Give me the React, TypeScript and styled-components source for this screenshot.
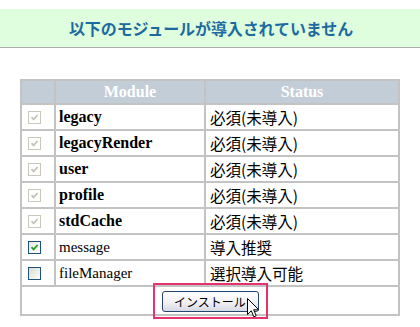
import React from "react";
import styled, { createGlobalStyle } from "styled-components";

const Global = createGlobalStyle`
  html, body { margin: 0; padding: 0; background: #ffffff; }
  body { font-family: "Liberation Serif", "Noto Sans CJK JP", serif; }
`;

const Page = styled.div`
  width: 420px;
  height: 327px;
  overflow: hidden;
  padding-top: 9px;
  box-sizing: border-box;
`;

const Banner = styled.div`
  height: 38px;
  background: #defedd;
  border-bottom: 1px solid #aeaeae;
  display: flex;
  align-items: center;
  justify-content: center;
`;

const Title = styled.h1`
  margin: 0;
  font-family: "Noto Sans CJK JP", sans-serif;
  font-size: 16px;
  font-weight: 700;
  color: #1d6aa0;
  letter-spacing: -0.1px;
  line-height: 1;
  padding-left: 2px;
`;

const Table = styled.table`
  margin: 31px 0 0 20px;
  width: 380px;
  border-collapse: separate;
  border-spacing: 2px;
  background: #c3c3c3;
  table-layout: fixed;
`;

const HeadCell = styled.th`
  height: 22px;
  padding: 0;
  background: #c3cdd7;
  color: #ffffff;
  font-family: "Liberation Serif", serif;
  font-size: 16px;
  font-weight: 700;
  text-align: center;
  line-height: 22px;
`;

const Cell = styled.td`
  height: 24px;
  padding: 0;
  background: #ffffff;
  line-height: 24px;
  vertical-align: middle;
`;

const CheckCell = styled(Cell)`
  padding-left: 6px;
`;

const NameCell = styled(Cell)<{ $required: boolean }>`
  padding-left: 3px;
  font-family: "Liberation Serif", serif;
  font-size: ${(p) => (p.$required ? "16px" : "15px")};
  font-weight: ${(p) => (p.$required ? 700 : 400)};
  color: #000;
`;

const StatusCell = styled(Cell)`
  padding-left: 4px;
  font-family: "Noto Sans CJK JP", sans-serif;
  font-size: 15.5px;
  color: #000;
  white-space: nowrap;
`;

const FootCell = styled.td`
  height: 27px;
  padding: 0;
  background: #ffffff;
  position: relative;
  text-align: center;
  vertical-align: middle;
`;

const Box = styled.span<{ $variant: "disabled" | "checked" | "empty" }>`
  display: flex;
  align-items: center;
  justify-content: center;
  width: 13px;
  height: 13px;
  box-sizing: border-box;
  border: 1px solid ${(p) => (p.$variant === "disabled" ? "#cac8bb" : "#1c5180")};
  background: ${(p) =>
    p.$variant === "empty"
      ? "linear-gradient(135deg, #dcdcd5 0%, #f4f4f0 70%, #ffffff 100%)"
      : p.$variant === "disabled"
      ? "#ffffff"
      : "linear-gradient(135deg, #e8e8e2 0%, #fafaf8 70%, #ffffff 100%)"};
`;

const Button = styled.button`
  width: 97px;
  height: 21px;
  padding: 0;
  border: 1px solid #23466f;
  border-radius: 3px;
  background: linear-gradient(180deg, #ffffff 0%, #f3f3f6 50%, #d9d9e4 100%);
  font-family: "Noto Sans CJK JP", sans-serif;
  font-size: 12px;
  color: #000;
  line-height: 19px;
  margin-top: 2px;
`;

const Highlight = styled.span`
  position: absolute;
  left: 131px;
  top: -4px;
  width: 115px;
  height: 36px;
  box-sizing: border-box;
  border: 2px solid #e6336c;
  pointer-events: none;
`;

const Cursor = styled.svg`
  position: absolute;
  left: 225px;
  top: 11px;
`;

type Mod = { name: string; status: string; required: boolean; checked: boolean };

const mods: Mod[] = [
  { name: "legacy", status: "必須(未導入)", required: true, checked: true },
  { name: "legacyRender", status: "必須(未導入)", required: true, checked: true },
  { name: "user", status: "必須(未導入)", required: true, checked: true },
  { name: "profile", status: "必須(未導入)", required: true, checked: true },
  { name: "stdCache", status: "必須(未導入)", required: true, checked: true },
  { name: "message", status: "導入推奨", required: false, checked: true },
  { name: "fileManager", status: "選択導入可能", required: false, checked: false },
];

function Check({ variant }: { variant: "disabled" | "checked" | "empty" }) {
  return (
    <Box $variant={variant}>
      {variant !== "empty" && (
        <svg width="9" height="9" viewBox="0 0 9 9">
          <path
            d="M1.5 4.2 L3.6 6.4 L7.6 2"
            fill="none"
            stroke={variant === "disabled" ? "#c4c3b9" : "#21a121"}
            strokeWidth="1.8"
          />
        </svg>
      )}
    </Box>
  );
}

export default function App() {
  return (
    <Page>
      <Global />
      <Banner>
        <Title>以下のモジュールが導入されていません</Title>
      </Banner>
      <Table>
        <colgroup>
          <col style={{ width: 32 }} />
          <col style={{ width: 148 }} />
          <col style={{ width: 192 }} />
        </colgroup>
        <thead>
          <tr>
            <HeadCell />
            <HeadCell>Module</HeadCell>
            <HeadCell>Status</HeadCell>
          </tr>
        </thead>
        <tbody>
          {mods.map((m) => (
            <tr key={m.name}>
              <CheckCell>
                <Check variant={m.required ? "disabled" : m.checked ? "checked" : "empty"} />
              </CheckCell>
              <NameCell $required={m.required}>{m.name}</NameCell>
              <StatusCell>{m.status}</StatusCell>
            </tr>
          ))}
          <tr>
            <FootCell colSpan={3}>
              <Button>インストール</Button>
              <Highlight />
              <Cursor width="13" height="21" viewBox="0 0 13 21">
                <path
                  d="M0.5 0.5 L0.5 16.5 L4.3 12.8 L6.8 18.8 L9.2 17.8 L6.7 11.8 L11.8 11.8 Z"
                  fill="#ffffff"
                  stroke="#000000"
                  strokeWidth="1"
                  strokeLinejoin="miter"
                />
              </Cursor>
            </FootCell>
          </tr>
        </tbody>
      </Table>
    </Page>
  );
}
